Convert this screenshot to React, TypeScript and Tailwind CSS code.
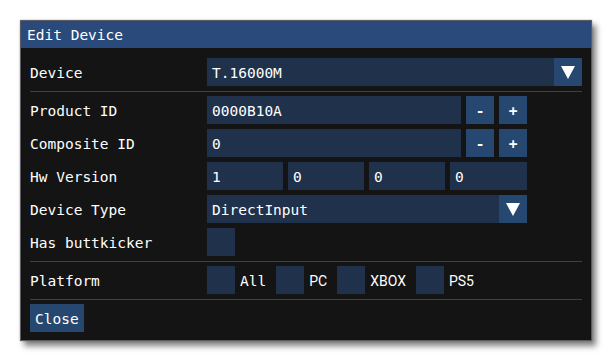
import React from "react";

const mono = { fontFamily: '"DejaVu Sans Mono", "Liberation Mono", monospace' };
const sans = { fontFamily: 'Roboto, "Noto Sans", sans-serif' };

function Arrow() {
  return (
    <svg width="14" height="13" viewBox="0 0 14 13">
      <polygon points="0,0 14,0 7,13" fill="#ffffff" />
    </svg>
  );
}

function Field({ value, className = "" }: { value: string; className?: string }) {
  return (
    <div className={`h-[28px] bg-[#1f314b] flex items-center pl-[5px] pt-[3px] ${className}`}>{value}</div>
  );
}

function SmallBtn({ label }: { label: string }) {
  return (
    <div className="w-[28px] h-[28px] bg-[#264870] flex items-center justify-center pt-[3px] font-bold">{label}</div>
  );
}

function Row({ label, children }: { label: string; children: React.ReactNode }) {
  return (
    <div className="flex h-[28px] items-center">
      <div className="w-[177px] shrink-0 pt-[3px]">{label}</div>
      <div className="flex-1 flex h-[28px]">{children}</div>
    </div>
  );
}

function Sep() {
  return <div className="h-px bg-[#404048] mt-[5px] mb-[4px]" />;
}

function Check({ label, isSans }: { label: string; isSans?: boolean }) {
  return (
    <div className="flex items-center mr-[10px]">
      <div className="w-[28px] h-[28px] bg-[#1f314b]" />
      <span className={`ml-[5px] pt-[3px] ${isSans ? "text-[14px]" : "text-[14.5px]"}`} style={isSans ? sans : mono}>
        {label}
      </span>
    </div>
  );
}

export default function App() {
  return (
    <div className="w-[612px] h-[362px] bg-white relative" style={mono}>
      <div className="absolute left-[20px] top-[20px] w-[572px] h-[321px] border border-[#5c5c62] bg-[#141414] text-white text-[14.5px] shadow-[4px_5px_6px_rgba(0,0,0,0.5),0_0_2px_rgba(0,0,0,0.25)] flex flex-col">
        <div className="h-[27px] bg-[#294a7a] flex items-center pl-[6px] pt-[2px]">Edit Device</div>
        <div className="flex flex-col px-[9px] pt-[10px]">
          <Row label="Device">
            <Field value="T.16000M" className="flex-1" />
            <div className="w-[28px] h-[28px] bg-[#264870] flex items-center justify-center">
              <Arrow />
            </div>
          </Row>
          <Sep />
          <div className="flex flex-col gap-[5px]">
            <Row label="Product ID">
              <Field value="0000B10A" className="w-[254px]" />
              <div className="ml-[5px]">
                <SmallBtn label="-" />
              </div>
              <div className="ml-[5px]">
                <SmallBtn label="+" />
              </div>
            </Row>
            <Row label="Composite ID">
              <Field value="0" className="w-[254px]" />
              <div className="ml-[5px]">
                <SmallBtn label="-" />
              </div>
              <div className="ml-[5px]">
                <SmallBtn label="+" />
              </div>
            </Row>
            <Row label="Hw Version">
              <div className="flex gap-[5px]">
                <Field value="1" className="w-[76px]" />
                <Field value="0" className="w-[76px]" />
                <Field value="0" className="w-[76px]" />
                <Field value="0" className="w-[77px]" />
              </div>
            </Row>
            <Row label="Device Type">
              <Field value="DirectInput" className="w-[292px]" />
              <div className="w-[28px] h-[28px] bg-[#264870] flex items-center justify-center">
                <Arrow />
              </div>
            </Row>
            <Row label="Has buttkicker">
              <div className="w-[28px] h-[28px] bg-[#1f314b]" />
            </Row>
          </div>
          <Sep />
          <Row label="Platform">
            <Check label="All" />
            <Check label="PC" isSans />
            <Check label="XBOX" isSans />
            <Check label="PS5" isSans />
          </Row>
          <Sep />
          <div className="flex">
            <div className="h-[28px] bg-[#264870] flex items-center px-[5px] pt-[3px]">Close</div>
          </div>
        </div>
      </div>
    </div>
  );
}
